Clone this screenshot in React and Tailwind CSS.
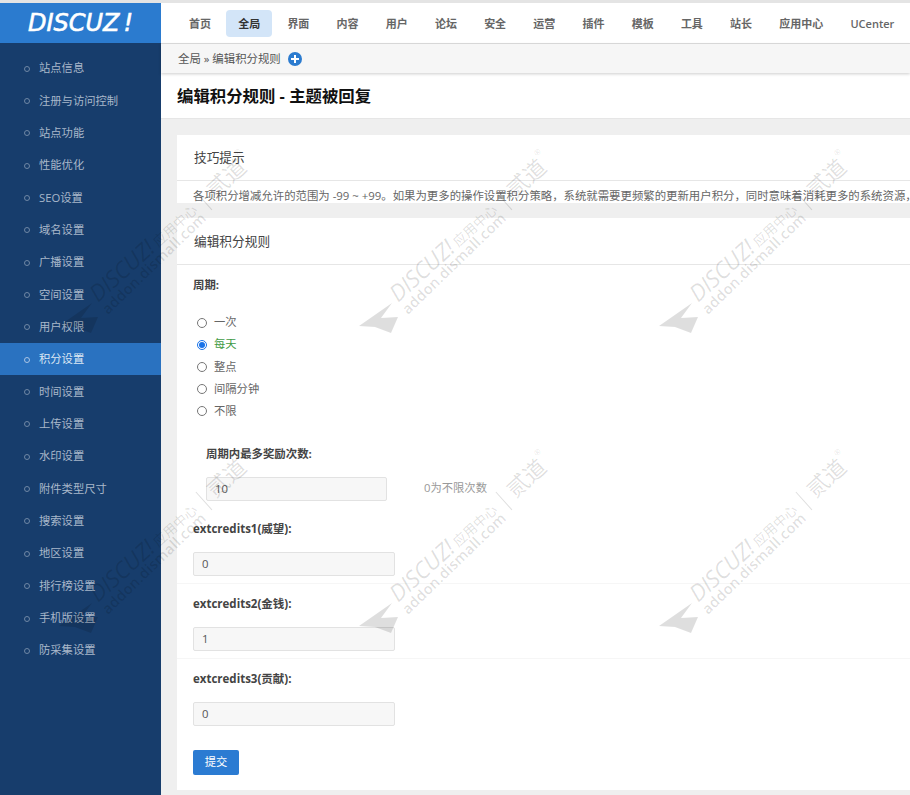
const FONT = "font-['Open_Sans','Noto_Sans_CJK_SC',sans-serif]";
const navs = ['首页','全局','界面','内容','用户','论坛','安全','运营','插件','模板','工具','站长','应用中心','UCenter'];
const menu = ['站点信息','注册与访问控制','站点功能','性能优化','SEO设置','域名设置','广播设置','空间设置','用户权限','积分设置','时间设置','上传设置','水印设置','附件类型尺寸','搜索设置','地区设置','排行榜设置','手机版设置','防采集设置'];
const radios = ['一次','每天','整点','间隔分钟','不限'];
const credits = [['extcredits1(威望):','0'],['extcredits2(金钱):','1'],['extcredits3(贡献):','0']];

function Watermark() {
  const tiles = [[59,326],[359,326],[659,326],[59,626],[359,626],[659,626]];
  return (
    <svg className="absolute top-0 left-0 pointer-events-none" width="910" height="795">
      {tiles.map(([x,y],i)=>(
        <g key={i} transform={`translate(${x} ${y})`} fill="#000" fillOpacity="0.13">
          <path d="M0 0 L33 -23 L22 -8 L39 -9 L32 7 L16 1 Z" />
          <g transform="translate(39 -23) rotate(-42)" fontFamily="'Open Sans','Noto Sans CJK SC',sans-serif">
            <text x="0" y="0" fontSize="23" fontStyle="italic" fontWeight="500" letterSpacing="-0.3">DISCUZ!</text>
            <text x="82" y="-1" fontSize="13.5" fontWeight="400">应用中心</text>
            <line x1="147" y1="-17" x2="147" y2="7" stroke="#000" strokeOpacity="0.13" strokeWidth="1" />
            <text x="157" y="1" fontSize="22" fontWeight="400">贰道</text>
            <text x="201" y="-16" fontSize="8">®</text>
          </g>
          <text transform="translate(49 -11) rotate(-44)" fontFamily="'Open Sans',sans-serif" fontSize="14.5" fontWeight="600" letterSpacing="0.3">addon.dismall.com</text>
        </g>
      ))}
    </svg>
  );
}

export default function App() {
  return (
    <div className={`relative flex h-[795px] w-[910px] flex-col overflow-hidden bg-white ${FONT}`}>
      <div className="h-[3px] shrink-0 bg-[#e4e4e4]" />
      <div className="flex min-h-0 flex-1">
        <aside className="w-[161px] shrink-0 bg-[#173d6c]">
          <div className="flex h-[40px] items-center justify-center bg-[#2b7bcf] font-['DejaVu_Sans',sans-serif] text-[24px] italic text-white [-webkit-text-stroke:0.6px_white]">
            DISCUZ<span className="ml-[4px]">!</span>
          </div>
          <ul className="pt-[8.5px]">
            {menu.map((m,i)=>(
              <li key={m} className={`flex h-[32.35px] items-center pl-[24px] pt-[2px] text-[11.3px] text-[#a9b8ca] ${i===9 ? 'bg-[#2a72c0] text-[#dde8f4]' : ''}`}>
                <span className={`mr-[9px] h-[6px] w-[6px] rounded-full border ${i===9 ? 'border-[#a9c4e4]' : 'border-[#6f87a5]'}`} />
                {m}
              </li>
            ))}
          </ul>
        </aside>
        <main className="flex min-w-0 flex-1 flex-col bg-[#efefef]">
          <nav className="flex h-[41px] shrink-0 items-center border-b border-[#dedede] bg-white pl-[16px] pt-[1px]">
            {navs.map((n,i)=>(
              <a key={n} className={`mr-[3.2px] flex h-[27px] shrink-0 items-center rounded-[4px] px-[12px] pt-[1px] text-[11px] font-semibold ${i===1 ? 'bg-[#d3e5f8] text-[#333]' : 'text-[#666]'}`}>{n}</a>
            ))}
          </nav>
          <div className="z-10 flex h-[29px] shrink-0 items-center bg-[#f6f6f6] pl-[17px] text-[11.4px] text-[#555] shadow-[0_1px_3px_rgba(0,0,0,0.2)]">
            全局 » 编辑积分规则
            <span className="relative ml-[7px] h-[14px] w-[14px] rounded-full bg-[#2b7bcf]">
              <span className="absolute top-[6px] left-[3px] h-[2px] w-[8px] bg-white" />
              <span className="absolute top-[3px] left-[6px] h-[8px] w-[2px] bg-white" />
            </span>
          </div>
          <div className="flex h-[46px] shrink-0 items-center border-b border-[#e6e6e6] bg-white pl-[16px] pt-[1px] text-[16.4px] font-bold text-[#111]">
            编辑积分规则 - 主题被回复
          </div>
          <div className="min-h-0 flex-1 overflow-hidden pt-[16px] pl-[16px]">
            <section className="h-[68px] w-[900px] overflow-hidden bg-white">
              <h3 className="flex h-[46px] items-center border-b border-[#e6e6e6] pl-[17px] pt-[1px] text-[12.7px] text-[#444]">技巧提示</h3>
              <p className="mt-[8px] whitespace-nowrap pl-[16px] text-[11.4px] leading-[14px] text-[#666]">各项积分增减允许的范围为 -99 ~ +99。如果为更多的操作设置积分策略，系统就需要更频繁的更新用户积分，同时意味着消耗更多的系统资源，</p>
            </section>
            <section className="mt-[15px] h-[572px] w-[900px] bg-white">
              <h3 className="flex h-[47px] items-center border-b border-[#e6e6e6] pl-[17px] pt-[1px] text-[12.7px] text-[#444]">编辑积分规则</h3>
              <div className="pl-[16px]">
                <div className="pt-[12px] text-[11.4px] leading-[16px] font-bold text-[#444]">周期:</div>
                <div className="mt-[18.5px] flex flex-col">
                  {radios.map((r,i)=>(
                    <label key={r} className={`flex h-[22.2px] items-center text-[11.3px] ${i===1 ? 'text-[#3f9b45]' : 'text-[#666]'}`}>
                      <input type="radio" name="period" defaultChecked={i===1} className="m-0 ml-[4px] mr-[7px] h-[10px] w-[10px] accent-[#1a73e8]" />
                      {r}
                    </label>
                  ))}
                </div>
                <div className="mt-[23.5px] pl-[13px] text-[11.4px] leading-[16px] font-bold text-[#444]">周期内最多奖励次数:</div>
                <div className="mt-[15px] flex items-center pl-[13px]">
                  <input readOnly value="10" className="h-[24px] w-[181px] rounded-[2px] border border-[#e2e2e2] bg-[#f7f7f7] px-[8px] text-[11.3px] text-[#555]" />
                  <span className="ml-[37px] text-[11.3px] text-[#999]">0为不限次数</span>
                </div>
              </div>
              <div className="mt-[20px]">
                {credits.map(([l,v],i)=>(
                  <div key={l} className={`pl-[16px] ${i<2 ? 'mb-[12px] border-b border-[#f6f6f6] pb-[7px]' : ''}`}>
                    <div className="text-[11.5px] leading-[16px] font-bold text-[#444]">{l}</div>
                    <input readOnly value={v} className="mt-[15px] block h-[24px] w-[202px] rounded-[2px] border border-[#e2e2e2] bg-[#f7f7f7] px-[8px] text-[11.3px] text-[#555]" />
                  </div>
                ))}
              </div>
              <button className="mt-[24px] ml-[16px] h-[25px] w-[46px] rounded-[2px] bg-[#2b7bd2] text-[11.3px] text-white">提交</button>
            </section>
          </div>
        </main>
      </div>
      <Watermark />
    </div>
  );
}
